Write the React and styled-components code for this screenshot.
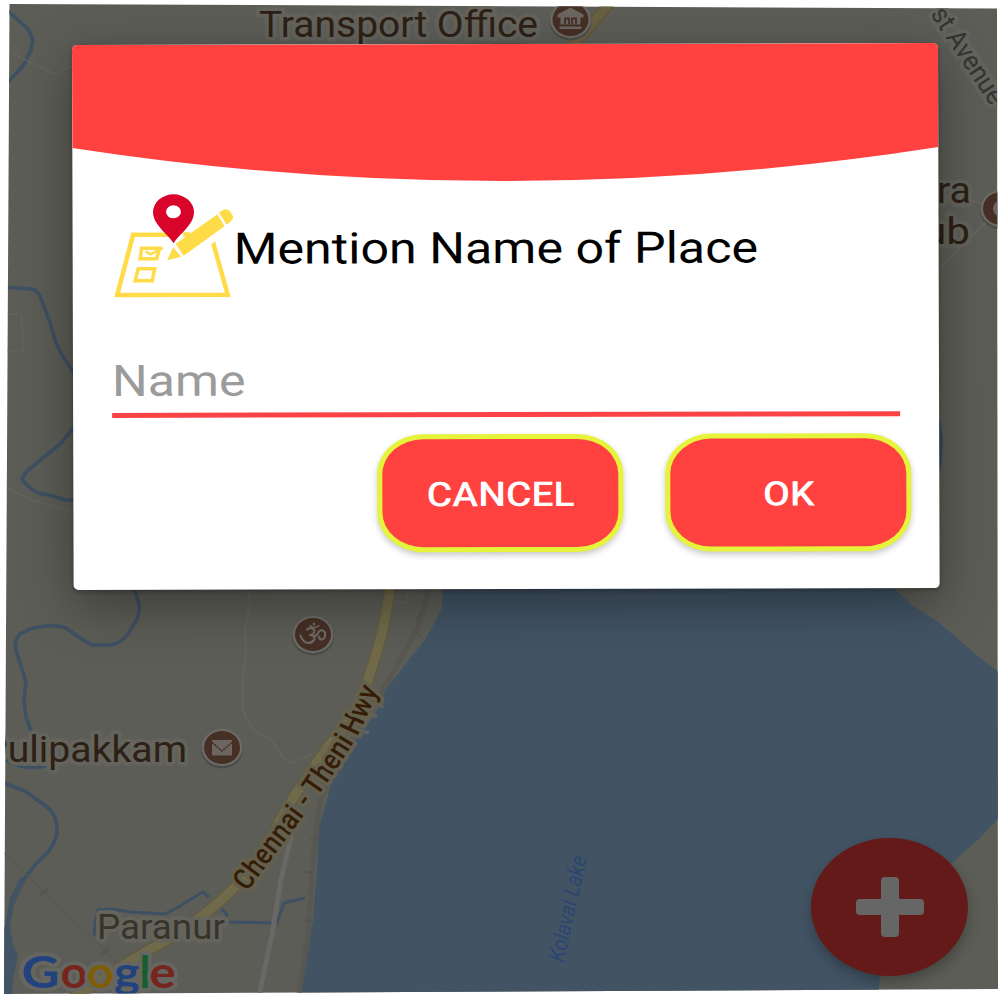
import React from 'react';
import styled, { createGlobalStyle } from 'styled-components';

const GlobalStyle = createGlobalStyle`
  body {
    margin: 0;
    background: #fff;
    overflow: hidden;
    font-family: Roboto, 'Liberation Sans', sans-serif;
  }
  * { box-sizing: border-box; }
`;

const Screen = styled.main`
  position: relative;
  width: 1000px;
  height: 1000px;
  padding: 45px 0 0 71.5px;
  overflow: hidden;
  clip-path: polygon(9.5px 4px, 997px 8.5px, 998px 989px, 4px 994px);
`;

const MapCanvas = styled.svg`
  position: absolute;
  inset: 0;
  width: 1000px;
  height: 1000px;
  font-family: Roboto, 'Liberation Sans', sans-serif;
`;

const River = styled.path`
  fill: none;
  stroke: #3e5063;
  stroke-width: ${(p) => p.$w || 3.6};
  stroke-linejoin: round;
`;

const Trail = styled.path`
  fill: none;
  stroke: #666661;
  stroke-width: 1.2;
`;

const Label = styled.text`
  fill: ${(p) => p.$color || '#2d2015'};
  font-size: ${(p) => p.$size}px;
  font-weight: ${(p) => p.$weight || 400};
  stroke: ${(p) => p.$halo || '#64645d'};
  stroke-width: ${(p) => (p.$halo === 'none' ? 0 : 7.5)}px;
  stroke-linejoin: round;
  paint-order: stroke;
`;

const Logo = styled(Label)`
  font-family: Lato, sans-serif;
`;

const Dialog = styled.section`
  position: relative;
  display: flex;
  flex-direction: column;
  width: 866px;
  height: 545px;
  background: #fff;
  border-radius: 5px;
  transform: matrix(1, -0.0022, 0.003, 1, 0, 0);
  transform-origin: 0 0;
  box-shadow: 0 16px 52px rgba(0, 0, 0, 0.36), 0 2px 4px rgba(0, 0, 0, 0.25);
`;

const Banner = styled.svg`
  display: block;
  flex: none;
  width: 866px;
  height: 138px;
  border-radius: 5px 5px 0 0;
`;

const TitleRow = styled.header`
  display: flex;
  align-items: center;
  height: 104px;
  margin: 11px 0 0 40.5px;
`;

const PlaceIcon = styled.svg`
  width: 120px;
  height: 104px;
  flex: none;
`;

const Title = styled.h1`
  margin: 0;
  font-size: 43.5px;
  font-weight: 400;
  line-height: 52px;
  color: #000;
  white-space: nowrap;
  transform: scaleX(1.154);
  transform-origin: 0 50%;
  padding-top: 7px;
`;

const Field = styled.label`
  display: flex;
  flex-direction: column;
  justify-content: flex-end;
  width: 788px;
  height: 119.5px;
  margin-left: 38.5px;
  padding-bottom: 5px;
  border-bottom: 5px solid #fb4246;
`;

const Placeholder = styled.span`
  align-self: flex-start;
  font-size: 43.5px;
  line-height: 52px;
  color: #9b9b9b;
  transform: scaleX(1.153);
  transform-origin: 0 50%;
`;

const Actions = styled.footer`
  display: flex;
  justify-content: flex-end;
  gap: 42px;
  margin-top: 17.5px;
  padding-right: 28px;
`;

const ActionButton = styled.button`
  width: 246px;
  height: 118px;
  padding: 2px 0 0;
  border: 5px solid #e5f33b;
  border-radius: 46px / 40px;
  background: #ff413f;
  color: #fff;
  font: 500 34px/40px Roboto, sans-serif;
  box-shadow: 0 3px 6px rgba(0, 0, 0, 0.22);
`;

const ButtonText = styled.span`
  display: inline-block;
  transform: scaleX(1.15);
`;

const AddButton = styled.button`
  position: absolute;
  left: 811px;
  top: 838px;
  width: 157px;
  height: 138px;
  padding: 0;
  display: grid;
  place-items: center;
  border: 0;
  border-radius: 50%;
  background: #641a19;
  box-shadow: 0 6px 14px rgba(0, 0, 0, 0.28);
`;

const PlusIcon = styled.svg`
  width: 68px;
  height: 60px;
`;

function Poi({ x, y, children }) {
  return (
    <g transform={`translate(${x} ${y})`}>
      <ellipse cy="2" rx="21" ry="19" fill="#4c4c49" />
      <ellipse rx="20.5" ry="18.5" fill="#6c6b68" />
      <ellipse rx="18" ry="16.5" fill="#462f24" />
      {children}
    </g>
  );
}

function MapView() {
  return (
    <MapCanvas viewBox="0 0 1000 1000">
      <rect width="1000" height="1000" fill="#5c5d56" />
      <path
        fill="#425464"
        d="M443 580 L442 607 L437 618 L425 640 L410 658 L397 675 L385 690 L375 715 L348 750 L333 775 L327 800 L319 827 L317 870 L313 920 L305 965 L297 998 H878 L880 975 L920 890 L952 863 L980 838 L1000 817 V673 L985 662 L950 632 L938 622 L912 605 L897 591 L890 580Z"
      />
      <path fill="#374a63" d="M930 415 L940 420 L943 440 L941 468 L930 480Z" />

      <River d="M8 11 L28 29 L33 40 L31 50 L23 66 L8 82" />
      <River d="M6 287 L32 289 Q37 290 40 296 L50 322 L55 340 Q62 358 76 375" />
      <River d="M76 425 L60 444 L26 472 L22 479 Q27 487 38 493 L53 496 L65 500 H76" />
      <River d="M134 588 L139 603 Q140 613 137 619 L128 634 Q120 644 110 645 H92 Q82 640 66 628 Q52 623 30 629 L20 634 Q13 642 16 650 L26 682 L24 700 L26 717 L32 733" />
      <River d="M6 760 Q24 771 46 766" />
      <River d="M4 783 L25 791 L47 807 Q58 815 57 834 Q54 845 47 853 L35 865 L22 882" />
      <path fill="#425464" d="M21 876 L26 879 L14 905 L10 925 L13 945 L18 955 L13 980 L12 998 H0 V940 L5 925 L10 898Z" />
      <River $w={3} d="M94 936 L95 922 L98 910 L112 909 L130 912 L165 914 L180 906 L203 892 L209 897" />
      <River $w={3} d="M222 909 L227 915 L224 922 L277 923 L284 903 L305 898" />

      <Trail d="M9 52 L30 62 L52 73 L60 73 L66 68 L76 64" />
      <Trail d="M6 314 H22 V328 L23 330 V351 H6" />
      <Trail d="M7 484 L10 490 L35 501 L62 508 L76 515" />
      <Trail d="M247 585 L250 603 L245 628 L246 650 L243 680 V710 L247 720 L256 732 L272 740 L281 755 L290 763 L310 755 L330 749" />
      <Trail d="M394 601 L406 604 L409 588" />
      <Trail d="M930 189 L985 204 M998 210 L940 268 M938 256 H952 L998 212 M942 20 L962 32" />

      <path d="M431 580 L418 628 L392 674 L362 725 L335 770 L320 800 L313 860 L308 935 L298 1000" fill="none" stroke="#585752" strokeWidth="5" />
      <path d="M422 612 l-7 9 M421 636 l-9 -5 M318 838 l-8 0 M312 872 l-7 0 M311 920 l-7 0 M303 950 l7 2" stroke="#55554f" strokeWidth="2" />
      <path d="M374 703 l9 4 M370 713 l7 4 M362 731 l7 2" stroke="#64645d" strokeWidth="3" />
      <path d="M4 853 L44 892 L105 950 L122 968" fill="none" stroke="#585953" strokeWidth="1.5" />
      <path d="M41 895 l7 -6 M101 955 l8 -7" stroke="#565751" strokeWidth="4" />
      <path d="M296 815 L281 880 L272 935 L258 1000" fill="none" stroke="#686867" strokeWidth="5" />
      <path d="M391 580 Q386 630 366 685 Q355 718 329 745 Q300 785 280 820 L262 857 L235 887 Q210 913 170 938 L132 960 L70 1000" fill="none" stroke="#625a3d" strokeWidth="11.5" />
      <path d="M391 580 Q386 630 366 685 Q355 718 329 745 Q300 785 280 820 L262 857 L235 887 Q210 913 170 938 L132 960 L70 1000" fill="none" stroke="#716a4a" strokeWidth="9.5" />
      <path d="M610 3 L560 60" stroke="#5f573a" strokeWidth="12" />
      <path d="M610 3 L560 60" stroke="#696044" strokeWidth="9" />

      <Label $size={36.5} x="259" y="36.8" textLength="279" lengthAdjust="spacingAndGlyphs">Transport Office</Label>
      <Label $size={37} x="937" y="202.5" textLength="34" lengthAdjust="spacingAndGlyphs">ra</Label>
      <Label $size={37} x="923" y="243.5" textLength="47" lengthAdjust="spacingAndGlyphs">ub</Label>
      <Label $size={36.5} x="-17" y="761.5" textLength="204" lengthAdjust="spacingAndGlyphs">Pulipakkam</Label>
      <Label $size={34.5} $color="#37342a" x="97" y="938.5" textLength="128" lengthAdjust="spacingAndGlyphs">Paranur</Label>
      <Label $size={27} $color="#333433" transform="translate(930 14) rotate(56.5)" textLength="111" lengthAdjust="spacingAndGlyphs">st Avenue</Label>
      <Label $size={22.5} $color="#2c4570" $halo="none" fontStyle="italic" transform="translate(563.5 963) rotate(-77.5)" textLength="108" lengthAdjust="spacingAndGlyphs">Kolavai Lake</Label>
      <path id="highway" d="M247 892 L305 814 Q342 763 358 735 Q370 710 387 670" fill="none" />
      <Label $size={29} $weight={500} $color="#351c06" $halo="#64604e">
        <textPath href="#highway" textLength="242" lengthAdjust="spacingAndGlyphs">Chennai - Theni Hwy</textPath>
      </Label>
      <Logo $size={44} $weight={700} $halo="#666661" y="987.500">
        <tspan x="21.500" fill="#21427d" textLength="38" lengthAdjust="spacingAndGlyphs">G</tspan>
        <tspan x="60.500" fill="#76251d" textLength="27" lengthAdjust="spacingAndGlyphs">o</tspan>
        <tspan x="87" fill="#7d5d08" textLength="27" lengthAdjust="spacingAndGlyphs">o</tspan>
        <tspan x="114" fill="#21427d" textLength="26" lengthAdjust="spacingAndGlyphs">g</tspan>
        <tspan x="139.500" fill="#165e2c">l</tspan>
        <tspan x="149.500" fill="#76251d" textLength="26" lengthAdjust="spacingAndGlyphs">e</tspan>
      </Logo>

      <Poi x={570.5} y={19.5}>
        <path d="M-13 -5 L0 -12 L13 -5 V-2 H10 V5 H-10 V-2 H-13Z M-11 7 H11 V9.500 H-11Z" fill="#6b6662" />
        <path d="M-5.500 5 V-1 H-1.500 V5 M1.500 5 V-1 H5.500 V5" fill="none" stroke="#462f24" strokeWidth="1.800" />
      </Poi>
      <Poi x={1001} y={208.5}>
        <circle r="8" fill="#6b6662" />
      </Poi>
      <Poi x={313} y={634.5}>
        <g fill="none" stroke="#6d6966" strokeWidth="2.2" strokeLinecap="round" strokeLinejoin="round">
          <path d="M-6 -5 Q-2 -8 1 -5 Q3 -1 -3 0.500 Q3 1 1 5.500 Q-2 9.500 -7 8 Q-11 6 -12.500 1" />
          <path d="M1 2 Q4 1 6 -3 Q9 -6 12 -2 Q13 4 9 5 Q6 5 6 2" />
          <path d="M-3 -9 Q1 -5 6 -9" strokeWidth="1.600" />
        </g>
        <circle cx="1" cy="-10.500" r="1.400" fill="#6d6966" />
      </Poi>
      <Poi x={222} y={747.5}>
        <rect x="-10" y="-7.500" width="20" height="15.500" fill="#6b6662" />
        <path d="M-10 -5 L0 3.500 L10 -5" fill="none" stroke="#462f24" strokeWidth="1.700" strokeDasharray="2 1" />
      </Poi>
    </MapCanvas>
  );
}

export default function App() {
  return (
    <>
      <GlobalStyle />
      <Screen>
        <MapView />
        <AddButton aria-label="Add place">
          <PlusIcon viewBox="0 0 68 60">
            <rect x="25" y="0" width="18" height="60" rx="4" fill="#666" />
            <rect x="0" y="22" width="68" height="16" rx="4" fill="#666" />
          </PlusIcon>
        </AddButton>
        <Dialog role="dialog">
          <Banner viewBox="0 0 866 138">
            <path d="M0 0 H866 V104 Q433 170.500 0 103Z" fill="#ff413f" />
          </Banner>
          <TitleRow>
            <PlaceIcon viewBox="114 194 120 104">
              <path d="M133.500 235 H206 L211 234 L228 295 H117.500Z" fill="none" stroke="#ffdb48" strokeWidth="4.500" />
              <path d="M142 248.500 H160 L157 259 H140.500Z M138.500 269 H155 L152.500 281 H135.500Z" fill="none" stroke="#ffdb48" strokeWidth="3.500" />
              <path d="M146 251.500 L151 254.500 L163 248" fill="none" stroke="#ffdb48" strokeWidth="2.500" />
              <path d="M174 244 L164 228 L182 228 L210 208 L234 200 V226 L210 246 L182 262 L164 264Z" fill="#fff" />
              <path d="M184 237 H187 L191 232.500 H183Z M176 244 L218 214.500 L225 226.500 L184 256Z M219.500 213 L223 210.500 Q227 208 231 212 L233.500 216.500 Q234.500 219 231 222 L227 225Z M167.500 260.500 L173.500 247.500 L181.500 257Z" fill="#ffdb48" />
              <path d="M174 243.500 C169 235 153.500 225 153.500 212.500 A20.500 18 0 0 1 194.500 212.500 C194.500 225 179 235 174 243.500Z" fill="#d90429" />
              <ellipse cx="174" cy="212" rx="7.500" ry="6.500" fill="#fff" />
            </PlaceIcon>
            <Title>Mention Name of Place</Title>
          </TitleRow>
          <Field>
            <Placeholder>Name</Placeholder>
          </Field>
          <Actions>
            <ActionButton><ButtonText>CANCEL</ButtonText></ActionButton>
            <ActionButton><ButtonText>OK</ButtonText></ActionButton>
          </Actions>
        </Dialog>
      </Screen>
    </>
  );
}
